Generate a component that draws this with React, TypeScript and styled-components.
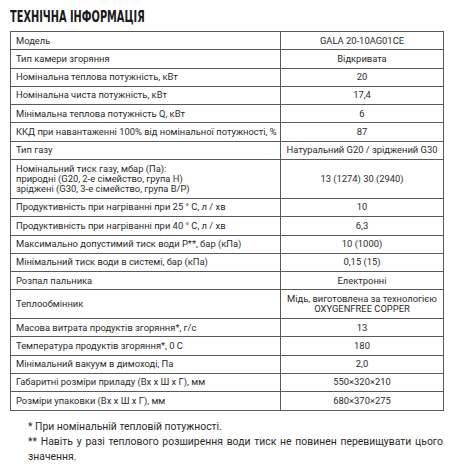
import React from "react";
import styled, { createGlobalStyle } from "styled-components";

const Global = createGlobalStyle`
  html, body { margin: 0; padding: 0; background: #ffffff; }
  body { font-family: Roboto, "DejaVu Sans Condensed", sans-serif; color: #262626; }
`;

const Page = styled.div`
  width: 451px;
  padding: 10px 7px 0 10px;
  box-sizing: border-box;
`;

const Title = styled.h1`
  margin: 0 0 7px 0;
  font-size: 15px;
  line-height: 14px;
  font-weight: 700;
  color: #1a1a1a;
  white-space: nowrap;
  transform: scaleX(0.727);
  transform-origin: left center;
  font-family: "DejaVu Sans Condensed", sans-serif;
`;

const Table = styled.table`
  width: 434px;
  border-collapse: collapse;
  border: 1.5px solid #2a2a2a;
  table-layout: fixed;
`;

const Cell = styled.td<{ $value?: boolean }>`
  border: 1px solid #5a5a5a;
  padding: 3.5px 5px 3.5px 5px;
  font-family: Roboto, sans-serif;
  font-size: 9.4px;
  line-height: 10.3px;
  color: #2a2a2a;
  white-space: nowrap;
  text-align: ${(p) => (p.$value ? "center" : "left")};
  vertical-align: middle;
  width: ${(p) => (p.$value ? "auto" : "259px")};
  padding-left: ${(p) => (p.$value ? "2px" : "5px")};
  padding-right: ${(p) => (p.$value ? "2px" : "5px")};
`;

const Notes = styled.div`
  padding: 9.5px 1px 0 18px;
  font-family: Roboto, sans-serif;
  font-size: 10.4px;
  line-height: 14.5px;
  color: #2a2a2a;
`;

const Note = styled.p`
  margin: 0 0 0.5px 0;
  text-align: justify;
`;

type Row = { label: React.ReactNode; value: React.ReactNode };

const rows: Row[] = [
  { label: "Модель", value: "GALA 20-10AG01CE" },
  { label: "Тип камери згоряння", value: "Відкривата" },
  { label: "Номінальна теплова потужність, кВт", value: "20" },
  { label: "Номінальна чиста потужність, кВт", value: "17,4" },
  { label: "Мінімальна теплова потужність Q, кВт", value: "6" },
  { label: "ККД при навантаженні 100% від номінальної потужності, %", value: "87" },
  { label: "Тип газу", value: "Натуральний G20 / зріджений G30" },
  {
    label: (
      <>
        Номінальний тиск газу, мбар (Па):
        <br />
        природні (G20, 2-е сімейство, група H)
        <br />
        зріджені (G30, 3-е сімейство, група B/P)
      </>
    ),
    value: "13 (1274) 30 (2940)",
  },
  { label: "Продуктивність при нагріванні при 25 ° С, л / хв", value: "10" },
  { label: "Продуктивність при нагріванні при 40 ° С, л / хв", value: "6,3" },
  { label: "Максимально допустимий тиск води P**, бар (кПа)", value: "10 (1000)" },
  { label: "Мінімальний тиск води в системі, бар (кПа)", value: "0,15 (15)" },
  { label: "Розпал пальника", value: "Електронні" },
  {
    label: "Теплообмінник",
    value: (
      <>
        Мідь, виготовлена за технологією
        <br />
        OXYGENFREE COPPER
      </>
    ),
  },
  { label: "Масова витрата продуктів згоряння*, г/с", value: "13" },
  { label: "Температура продуктів згоряння*, 0 С", value: "180" },
  { label: "Мінімальний вакуум в димоході, Па", value: "2,0" },
  { label: "Габаритні розміри приладу (Вх х Ш х Г), мм", value: "550×320×210" },
  { label: "Розміри упаковки (Вх х Ш х Г), мм", value: "680×370×275" },
];

export default function App() {
  return (
    <>
      <Global />
      <Page>
        <Title>ТЕХНІЧНА ІНФОРМАЦІЯ</Title>
        <Table>
          <tbody>
            {rows.map((r, i) => (
              <tr key={i}>
                <Cell>{r.label}</Cell>
                <Cell $value>{r.value}</Cell>
              </tr>
            ))}
          </tbody>
        </Table>
        <Notes>
          <Note>* При номінальній тепловій потужності.</Note>
          <Note>
            ** Навіть у разі теплового розширення води тиск не повинен перевищувати цього значення.
          </Note>
        </Notes>
      </Page>
    </>
  );
}
